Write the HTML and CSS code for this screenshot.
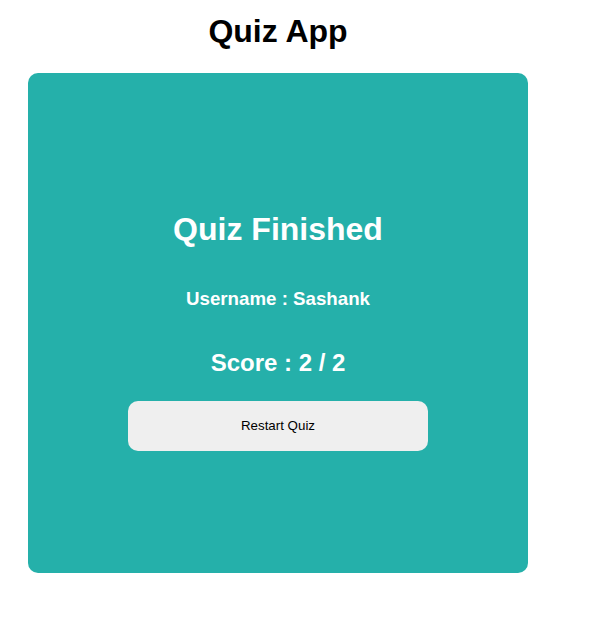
FILE: index.html
```html
<!DOCTYPE html>
<html lang="en">
<head>
<meta charset="utf-8">
<title>Quiz App</title>
<link rel="stylesheet" href="styles.css">
</head>
<body>
  <div class="app">
    <h1 class="app-title">Quiz App</h1>
    <div class="card">
      <h1 class="finished">Quiz Finished</h1>
      <h3 class="username">Username : Sashank</h3>
      <h2 class="score">Score : 2 / 2</h2>
      <button class="restart">Restart Quiz</button>
    </div>
  </div>
</body>
</html>
```
FILE: styles.css
```css
body {
  margin: 0;
  padding: 13px 8px 8px;
  font-family: "Liberation Sans", Arial, sans-serif;
  background: #ffffff;
}

.app {
  width: 500px;
  margin-left: 20px;
}

.app-title {
  margin: 0 0 23px;
  text-align: center;
  font-size: 32px;
  font-weight: bold;
  color: #000;
}

.card {
  box-sizing: border-box;
  width: 500px;
  height: 500px;
  background: #25b0aa;
  border-radius: 10px;
  color: #fff;
  display: flex;
  flex-direction: column;
  align-items: center;
  justify-content: center;
  text-align: center;
}

.finished {
  font-size: 32px;
  margin: 21.44px 0;
}

.username {
  font-size: 18.72px;
  margin: 18.72px 0;
}

.score {
  font-size: 24px;
  margin: 19.92px 0;
}

.restart {
  width: 300px;
  height: 50px;
  margin: 4px 0 6px;
  border: none;
  border-radius: 10px;
  background: #efefef;
  color: #000;
  font-family: "Liberation Sans", Arial, sans-serif;
  font-size: 13.33px;
  cursor: pointer;
}
```
